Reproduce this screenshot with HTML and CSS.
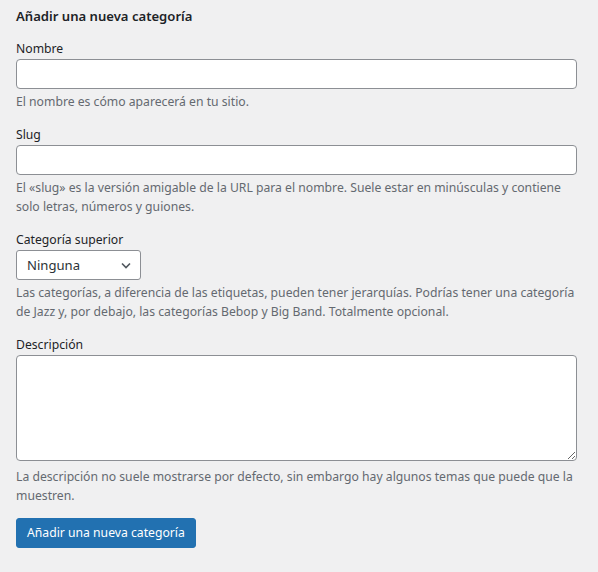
FILE: index.html
```html
<!DOCTYPE html>
<html lang="es">
<head>
<meta charset="utf-8">
<title>Añadir una nueva categoría</title>
<link rel="stylesheet" href="styles.css">
</head>
<body>
<div class="form-wrap">
  <h2 class="form-title">Añadir una nueva categoría</h2>
  <form class="add-form">
    <div class="form-field">
      <label for="tag-name">Nombre</label>
      <input type="text" id="tag-name" class="text-input">
      <p class="description">El nombre es cómo aparecerá en tu sitio.</p>
    </div>
    <div class="form-field">
      <label for="tag-slug">Slug</label>
      <input type="text" id="tag-slug" class="text-input">
      <p class="description">El «slug» es la versión amigable de la URL para el nombre. Suele estar en minúsculas y contiene solo letras, números y guiones.</p>
    </div>
    <div class="form-field">
      <label for="parent">Categoría superior</label>
      <div class="select-wrap">
        <select id="parent" class="postform">
          <option>Ninguna</option>
        </select>
        <svg class="chevron" width="12" height="9" viewBox="0 0 12 9"><polyline points="2,2.5 6,6.5 10,2.5" fill="none" stroke="#50575e" stroke-width="1.6"/></svg>
      </div>
      <p class="description">Las categorías, a diferencia de las etiquetas, pueden tener jerarquías. Podrías tener una categoría de Jazz y, por debajo, las categorías Bebop y Big Band. Totalmente opcional.</p>
    </div>
    <div class="form-field">
      <label for="tag-description">Descripción</label>
      <textarea id="tag-description" class="text-area"></textarea>
      <p class="description desc-after-area">La descripción no suele mostrarse por defecto, sin embargo hay algunos temas que puede que la muestren.</p>
    </div>
    <div class="submit-row">
      <button type="button" class="button-primary">Añadir una nueva categoría</button>
    </div>
  </form>
</div>
</body>
</html>
```

FILE: styles.css
```css
html, body {
  margin: 0;
  padding: 0;
  background: #f0f0f1;
}

body {
  font-family: "Noto Sans", "Open Sans", sans-serif;
  font-size: 12.2px;
  color: #3c434a;
}

.form-wrap {
  padding: 6px 21px 0 16px;
}

.form-title {
  margin: 0 0 12px;
  font-size: 13.1px;
  font-weight: 600;
  line-height: 20px;
  color: #1d2327;
}

.form-field {
  margin-bottom: 12px;
}

.form-field label {
  display: block;
  line-height: 21px;
  color: #1d2327;
}

.text-input {
  display: block;
  box-sizing: border-box;
  width: 100%;
  height: 30px;
  margin: 0;
  padding: 0 8px;
  border: 1px solid #8c8f94;
  border-radius: 4px;
  background: #fff;
  font: inherit;
  color: #2c3338;
}

.select-wrap {
  position: relative;
  width: 125px;
  height: 30px;
}

.postform {
  box-sizing: border-box;
  width: 125px;
  height: 30px;
  margin: 0;
  padding: 0 24px 0 10px;
  border: 1px solid #8c8f94;
  border-radius: 3px;
  background: #fff;
  font: inherit;
  font-size: 13.1px;
  color: #2c3338;
  appearance: none;
  -webkit-appearance: none;
}

.chevron {
  position: absolute;
  left: 104px;
  top: 11px;
  pointer-events: none;
}

.description {
  margin: 3px 0 0;
  line-height: 19.5px;
  color: #646970;
}

.text-area {
  display: block;
  box-sizing: border-box;
  width: 100%;
  height: 106px;
  margin: 0;
  padding: 2px 6px;
  border: 1px solid #8c8f94;
  border-radius: 4px;
  background: #fff;
  font: inherit;
}

.desc-after-area {
  margin-top: 6px;
}

.submit-row {
  padding: 0;
}

.button-primary {
  box-sizing: border-box;
  height: 30px;
  margin: 0;
  padding: 0 10px;
  border: 1px solid #2271b1;
  border-radius: 3px;
  background: #2271b1;
  color: #fff;
  font: inherit;
  font-size: 12.2px;
  cursor: pointer;
}
```
